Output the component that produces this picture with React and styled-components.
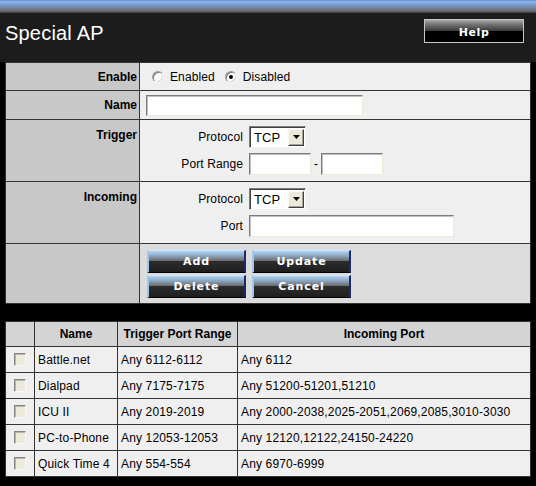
import React from 'react';
import styled, { createGlobalStyle } from 'styled-components';

const Global = createGlobalStyle`
  html, body { margin: 0; padding: 0; background: #000; }
  body { font-family: "Liberation Sans", Arial, sans-serif; font-size: 12px; color: #000; }
  * { box-sizing: border-box; }
`;

const Page = styled.div`
  width: 536px;
  height: 486px;
  background: #000;
  overflow: hidden;
`;

const TopBand = styled.div`
  height: 13px;
  background: linear-gradient(to bottom, #4a72b0 0px, #8cb8f6 1px, #7fa3d8 4px, #70829e 8px, #6a6a6a 11px, #3c3c3c 13px);
`;

const Header = styled.header`
  height: 49px;
  background: #1c1c1c;
  display: flex;
  justify-content: space-between;
  align-items: flex-start;
  padding: 6px 12px 0 5px;
`;

const Title = styled.h1`
  margin: 2px 0 0;
  font: 400 20px/24px "Liberation Sans", Arial, sans-serif;
  letter-spacing: 0.2px;
  color: #fff;
`;

const HelpButton = styled.button`
  width: 100px;
  height: 24px;
  border: 1px solid #c8c8c8;
  padding: 2px 0 0;
  background: linear-gradient(to bottom, #a8a8a8 0%, #707070 22%, #3c3c3c 48%, #000 50%, #000 100%);
  color: #fff;
  font: 700 11px "DejaVu Sans", Verdana, sans-serif;
  letter-spacing: 0.6px;
`;

const FormGrid = styled.div`
  margin-left: 5px;
  width: 526px;
  display: grid;
  grid-template-columns: 133px 1fr;
  grid-template-rows: 27px 28px 61px 61px 59px;
  gap: 1px;
  padding: 1px;
  background: #333;
`;

const LabelCell = styled.div`
  background: #c8c8c8;
  font-weight: 700;
  display: flex;
  justify-content: flex-end;
  align-items: ${p => (p.$top ? 'flex-start' : 'center')};
  padding: ${p => (p.$top ? '8px 2px 0 0' : '0 2px 0 0')};
`;

const FieldCell = styled.div`
  background: ${p => (p.$shade ? '#dcdcdc' : '#efefef')};
  display: flex;
  align-items: center;
  padding-left: ${p => p.$pad ?? 6}px;
  letter-spacing: 0.1px;
`;

const RadioGroup = styled.label`
  display: flex;
  align-items: center;
  gap: 6px;
  margin-left: ${p => p.$ml}px;
`;

const Radio = styled.span`
  width: 12px;
  height: 12px;
  border-radius: 50%;
  border: 1px solid;
  border-color: #9a9a9a #f4f4f4 #f4f4f4 #9a9a9a;
  box-shadow: inset 1px 1px 0 #7a7a7a, inset -1px -1px 0 #d8d6cc;
  background: #fff;
  display: flex;
  align-items: center;
  justify-content: center;
  &::after {
    content: '';
    width: 4px;
    height: 4px;
    border-radius: 50%;
    background: ${p => (p.$checked ? '#000' : 'transparent')};
  }
`;

const TextInput = styled.input`
  width: ${p => p.$w}px;
  height: ${p => p.$h ?? 22}px;
  margin: 0;
  padding: 0 2px;
  border: 1px solid;
  border-color: #7c7c7c #ece9d8 #ece9d8 #7c7c7c;
  box-shadow: inset 1px 1px 0 #c0c0c0;
  background: #fff;
  outline: none;
  font: 12px "Liberation Sans", Arial, sans-serif;
`;

const InnerGrid = styled.div`
  display: grid;
  grid-template-columns: 103px auto;
  column-gap: 6px;
  row-gap: 5px;
  padding: 6px 0 5px;
  align-items: center;
  align-self: flex-start;
`;

const InnerLabel = styled.span`
  text-align: right;
`;

const SelectBox = styled.div`
  width: 57px;
  height: 22px;
  display: flex;
  align-items: center;
  justify-content: space-between;
  background: #fff;
  border: 1px solid;
  border-color: #7c7c7c #f4f4f4 #f4f4f4 #7c7c7c;
  box-shadow: inset 1px 1px 0 #404040;
  padding: 1px 1px 1px 4px;
  font: 13px "Liberation Sans", Arial, sans-serif;
`;

const SelectArrow = styled.span`
  width: 16px;
  height: 17px;
  background: #ece9d8;
  border: 1px solid;
  border-color: #f8f8f4 #404040 #404040 #f8f8f4;
  box-shadow: inset -1px -1px 0 #a6a49a;
  display: flex;
  align-items: center;
  justify-content: center;
`;

const Range = styled.div`
  display: flex;
  align-items: center;
  gap: 3px;
`;

const ButtonGrid = styled.div`
  display: grid;
  grid-template-columns: 99px 99px;
  grid-auto-rows: 23px;
  column-gap: 6px;
  row-gap: 2px;
  align-self: flex-start;
  margin-top: 6px;
`;

const ActionButton = styled.button`
  padding: 0;
  border-style: solid;
  border-width: 1px 2px 1px 2px;
  border-color: #cfe6ff #1c2a6c #000 #9cc8ec;
  background: linear-gradient(to bottom, #b4d4f4 0%, #8ea8c4 22%, #6c6c6c 46%, #2c2c2c 50%, #1e1e1e 100%);
  color: #fff;
  font: 700 11px "DejaVu Sans", Verdana, sans-serif;
  letter-spacing: 0.9px;
`;

const ListGrid = styled.div`
  margin: 17px 0 0 5px;
  width: 526px;
  display: grid;
  grid-template-columns: 28px 82px 119px 1fr;
  grid-template-rows: 24px;
  grid-auto-rows: 25px;
  gap: 1px;
  padding: 1px;
  background: #333;
`;

const HeadCell = styled.div`
  background: #d4d4d4;
  font-weight: 700;
  display: flex;
  align-items: center;
  justify-content: center;
`;

const Cell = styled.div`
  background: #efefef;
  display: flex;
  align-items: center;
  justify-content: ${p => (p.$center ? 'center' : 'flex-start')};
  padding-left: ${p => (p.$center ? 0 : 3)}px;
  white-space: nowrap;
  letter-spacing: 0.15px;
`;

const Check = styled.span`
  width: 12px;
  height: 13px;
  background: #eceadb;
  border: 1px solid;
  border-color: #848484 #f8f8f8 #f8f8f8 #848484;
  box-shadow: inset 1px 1px 0 #b8b6aa;
`;

const Arrow = () => (
  <svg width="7" height="4" viewBox="0 0 7 4"><path d="M0 0h7L3.5 4z" fill="#000" /></svg>
);

const Select = () => (
  <SelectBox>
    <span>TCP</span>
    <SelectArrow><Arrow /></SelectArrow>
  </SelectBox>
);

const rows = [
  ['Battle.net', 'Any 6112-6112', 'Any 6112'],
  ['Dialpad', 'Any 7175-7175', 'Any 51200-51201,51210'],
  ['ICU II', 'Any 2019-2019', 'Any 2000-2038,2025-2051,2069,2085,3010-3030'],
  ['PC-to-Phone', 'Any 12053-12053', 'Any 12120,12122,24150-24220'],
  ['Quick Time 4', 'Any 554-554', 'Any 6970-6999'],
];

export default function App() {
  return (
    <Page>
      <Global />
      <TopBand />
      <Header>
        <Title>Special AP</Title>
        <HelpButton>Help</HelpButton>
      </Header>
      <FormGrid>
        <LabelCell>Enable</LabelCell>
        <FieldCell>
          <RadioGroup $ml={6}><Radio />Enabled</RadioGroup>
          <RadioGroup $ml={10}><Radio $checked />Disabled</RadioGroup>
        </FieldCell>
        <LabelCell>Name</LabelCell>
        <FieldCell>
          <TextInput $w={217} $h={21} />
        </FieldCell>
        <LabelCell $top>Trigger</LabelCell>
        <FieldCell $pad={0}>
          <InnerGrid>
            <InnerLabel>Protocol</InnerLabel>
            <div><Select /></div>
            <InnerLabel>Port Range</InnerLabel>
            <Range>
              <TextInput $w={62} />
              <span>-</span>
              <TextInput $w={62} />
            </Range>
          </InnerGrid>
        </FieldCell>
        <LabelCell $top>Incoming</LabelCell>
        <FieldCell $pad={0}>
          <InnerGrid>
            <InnerLabel>Protocol</InnerLabel>
            <div><Select /></div>
            <InnerLabel>Port</InnerLabel>
            <TextInput $w={205} />
          </InnerGrid>
        </FieldCell>
        <LabelCell />
        <FieldCell $shade $pad={7}>
          <ButtonGrid>
            <ActionButton>Add</ActionButton>
            <ActionButton>Update</ActionButton>
            <ActionButton>Delete</ActionButton>
            <ActionButton>Cancel</ActionButton>
          </ButtonGrid>
        </FieldCell>
      </FormGrid>
      <ListGrid>
        <HeadCell />
        <HeadCell>Name</HeadCell>
        <HeadCell>Trigger Port Range</HeadCell>
        <HeadCell>Incoming Port</HeadCell>
        {rows.map(r => (
          <React.Fragment key={r[0]}>
            <Cell $center><Check /></Cell>
            <Cell>{r[0]}</Cell>
            <Cell>{r[1]}</Cell>
            <Cell>{r[2]}</Cell>
          </React.Fragment>
        ))}
      </ListGrid>
    </Page>
  );
}
